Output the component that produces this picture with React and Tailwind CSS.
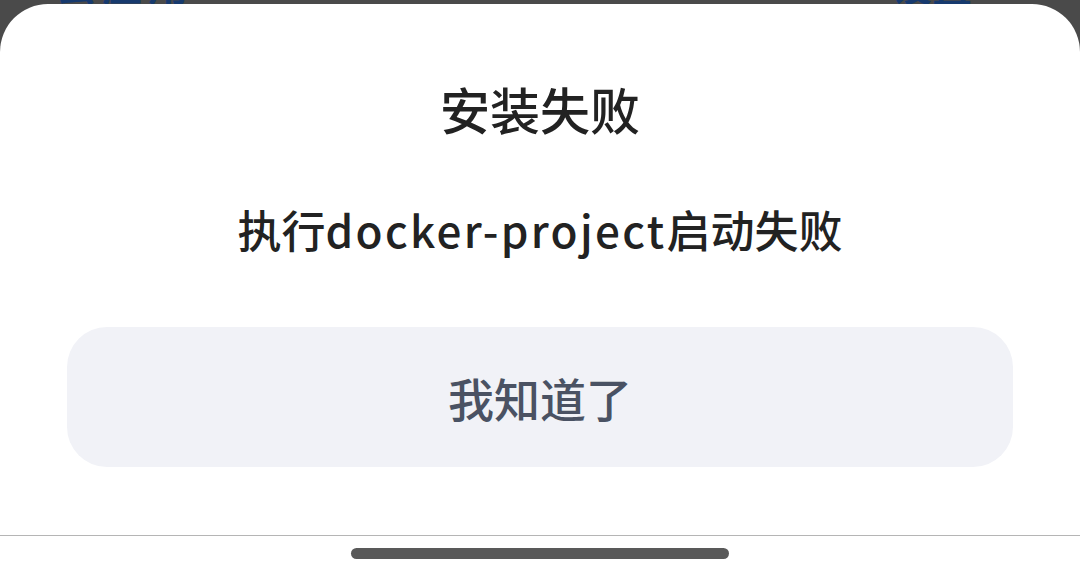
import React from 'react';

const font = { fontFamily: '"Noto Sans CJK SC", "Noto Sans", sans-serif' };

const App = () => {
    return (
        <div className="w-[1080px] h-[581px] bg-[#4a4a4a] overflow-hidden flex flex-col" style={font}>
            {/* strip of the page behind the sheet */}
            <div className="h-[4px] overflow-hidden flex justify-between px-[56px]">
                <span className="text-[40px] leading-[40px] font-bold text-[#173a6e] -mt-[36px] tracking-[6px]">云应用</span>
                <span className="text-[40px] leading-[40px] font-bold text-[#173a6e] -mt-[36px] mr-[52px]">设置</span>
            </div>

            <div className="flex-1 bg-white rounded-t-[48px] flex flex-col items-center pt-[75px]">
                <h1 className="text-[50px] leading-[58px] font-medium text-[#222222]">安装失败</h1>
                <p className="mt-[66px] text-[44px] leading-[52px] font-medium text-[#222222]">
                    执行<span className="tracking-[2.3px]">docker-project</span>启动失败
                </p>

                <button className="mt-[72px] w-[946px] h-[140px] rounded-[40px] bg-[#f1f2f7] text-[46px] font-medium text-[#4a5263]">
                    我知道了
                </button>

                <div className="mt-[68px] w-full h-px bg-[#b5b5b5]"></div>
                <div className="mt-[12px] w-[378px] h-[11px] rounded-full bg-[#595959]"></div>
            </div>
        </div>
    );
};

export default App;
